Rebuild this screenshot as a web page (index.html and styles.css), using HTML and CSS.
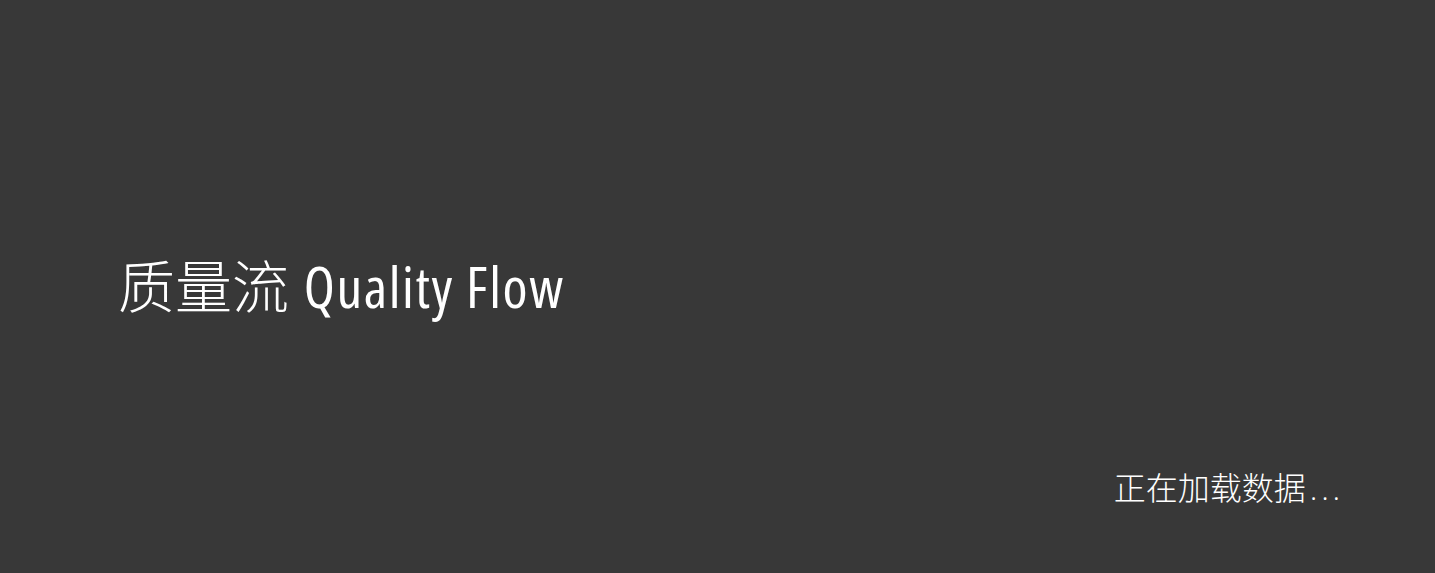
FILE: index.html
```html
<!DOCTYPE html>
<html lang="zh-CN">
<head>
<meta charset="utf-8">
<title>质量流 Quality Flow</title>
<link rel="stylesheet" href="styles.css">
</head>
<body>
<div class="splash">
  <div class="spacer"></div>
  <main class="splash-main">
    <h1 class="title">质量流 <span class="latin">Quality Flow</span></h1>
  </main>
  <footer class="splash-footer">
    <span class="status">正在加载数据<span class="dots">...</span></span>
  </footer>
</div>
</body>
</html>
```
FILE: styles.css
```css
html, body {
  margin: 0;
  padding: 0;
  height: 100%;
  background: #383838;
  color: #ffffff;
  font-family: "Open Sans", "Noto Sans CJK SC", sans-serif;
}
.splash {
  height: 100vh;
  display: grid;
  grid-template-rows: 1fr auto 1fr;
  box-sizing: border-box;
  padding: 0 91px 0 118px;
}
.splash-main {
  display: flex;
  align-items: center;
}
.title {
  margin: 0;
  font-weight: 300;
  font-size: 57px;
  line-height: 1;
  white-space: nowrap;
}
.latin {
  font-stretch: 75%;
  font-weight: 400;
  letter-spacing: 1.6px;
}
.splash-footer {
  display: flex;
  justify-content: flex-end;
  align-items: flex-end;
  padding-bottom: 69px;
}
.status {
  font-family: "Noto Sans CJK SC", sans-serif;
  font-size: 32px;
  line-height: 1;
  font-weight: 300;
  white-space: nowrap;
}
.dots {
  font-family: "Open Sans", sans-serif;
  font-weight: 300;
  letter-spacing: 3.8px;
  margin-left: 4px;
}
```
